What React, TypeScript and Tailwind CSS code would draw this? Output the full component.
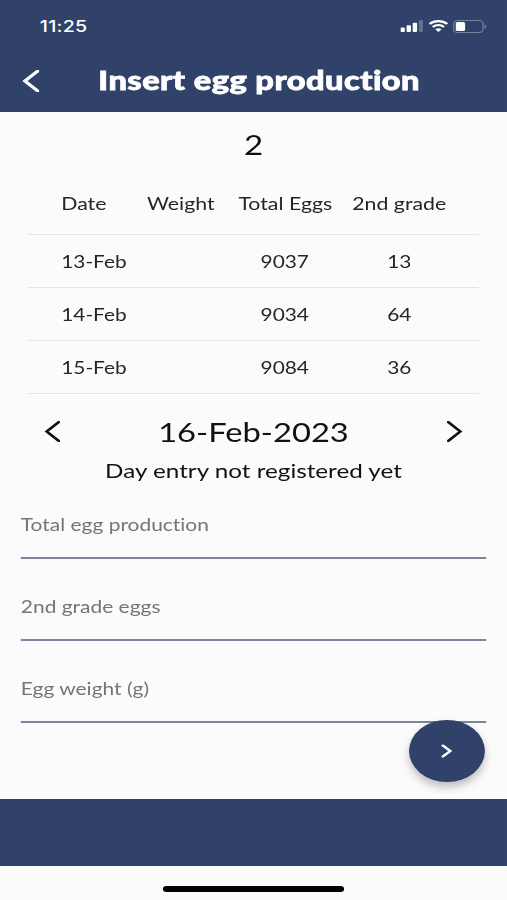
import React from "react";

const rows = [
  { date: "13-Feb", total: "9037", second: "13" },
  { date: "14-Feb", total: "9034", second: "64" },
  { date: "15-Feb", total: "9084", second: "36" },
];

const fields = ["Total egg production", "2nd grade eggs", "Egg weight (g)"];

const columns = "grid grid-cols-[70px_74px_78px_108px] items-center border-b-[1.5px] border-[#e4e4e5] pl-[27px]";

function Chevron({ left = false, className, weight = 2.3 }: { left?: boolean; className: string; weight?: number }) {
  return (
    <svg viewBox="0 0 12 20" preserveAspectRatio="none" fill="none" stroke="currentColor" className={className}>
      <path d={left ? "M11 1L2 10L11 19" : "M1 1L10 10L1 19"} strokeWidth={weight} strokeLinecap="round" />
    </svg>
  );
}

function StatusIcons() {
  return (
    <div className="flex items-center">
      <svg width="19" height="12" viewBox="0 0 19 12" fill="white">
        <rect x="0" y="7.5" width="3.6" height="4.5" rx="0.9" />
        <rect x="5" y="5.2" width="3.6" height="6.8" rx="0.9" />
        <rect x="10" y="2.7" width="3.6" height="9.3" rx="0.9" />
        <rect x="15" y="0" width="3.4" height="12" rx="0.9" opacity="0.25" />
      </svg>
      <svg width="16" height="12" viewBox="0 0 16 12" fill="none" stroke="white" className="ml-1">
        <path d="M0.8 4.1C4.8 0.1 11.2 0.1 15.2 4.1" strokeWidth="2.1" />
        <path d="M3.4 6.9C6 4.4 10 4.4 12.6 6.9" strokeWidth="2.1" />
        <path d="M5.4 9.2C6.9 7.9 9.1 7.9 10.6 9.2L8 11.9Z" fill="white" stroke="none" />
      </svg>
      <svg width="28" height="13" viewBox="0 0 28 13" fill="none" className="ml-[4px]">
        <rect x="0.5" y="0.5" width="24" height="12" rx="3.2" stroke="white" strokeOpacity="0.35" />
        <rect x="2.2" y="2" width="7.6" height="9" rx="1.5" fill="white" />
        <path d="M25.8 4.5C27.4 5.2 27.4 7.8 25.8 8.5Z" fill="white" fillOpacity="0.4" />
      </svg>
    </div>
  );
}

export default function App() {
  return (
    <div className="h-[900px] w-[507px] overflow-hidden bg-[#fbfbfb]">
      <div className="flex h-[900px] w-[414px] origin-top-left scale-x-[1.2246] flex-col font-['Lato',sans-serif] text-[#252525] [font-variant-ligatures:none]">
        <header className="h-[111.5px] shrink-0 bg-[#304269] text-white">
          <div className="flex h-[52px] items-center justify-between pr-[16.5px] pl-[32.5px]">
            <span className="font-['Inter',sans-serif] text-[16px] font-medium tracking-[0.2px]">11:25</span>
            <StatusIcons />
          </div>
          <div className="flex h-[59px] items-center pb-[2px] pl-[18px]">
            <Chevron left weight={2.6} className="h-[22px] w-[14px]" />
            <h1 className="ml-[48.3px] pt-[1px] text-[26.6px] font-black tracking-[0.37px] whitespace-nowrap [-webkit-text-stroke:0.8px_white]">Insert egg production</h1>
          </div>
        </header>

        <main className="flex h-[687.5px] shrink-0 flex-col">
          <div className="flex h-[62px] items-center justify-center pt-[5px] text-[27px] text-[#111]">2</div>
          <section className="mx-[23px] text-[17px] whitespace-nowrap">
            <div className={columns + " h-[61.5px] pt-px text-[17.4px]"}>
              <span>Date</span>
              <span>Weight</span>
              <span className="text-center">Total Eggs</span>
              <span className="text-center">2nd grade</span>
            </div>
            {rows.map((row) => (
              <div key={row.date} className={columns + " h-[53.1px] pt-[1.5px]"}>
                <span>{row.date}</span>
                <span />
                <span className="pr-px text-center">{row.total}</span>
                <span className="text-center">{row.second}</span>
              </div>
            ))}
          </section>

          <section className="flex h-[83px] flex-col text-[#111]">
            <div className="flex h-[75px] shrink-0 items-center justify-between pr-[36px] pl-[36px]">
              <Chevron left className="h-[21px] w-[13px]" />
              <span className="text-[26.7px]">16-Feb-2023</span>
              <Chevron className="h-[21px] w-[13px]" />
            </div>
            <p className="-mt-[11px] text-center text-[19.8px] leading-[24px]">Day entry not registered yet</p>
          </section>

          <form className="mx-[17px] flex flex-col text-[17.1px] text-[#757575]">
            {fields.map((field) => (
              <label key={field} className="flex h-[82px] items-end border-b-2 border-[#7c859d] pb-[20px] leading-[24px]">
                {field}
              </label>
            ))}
          </form>
          <button className="z-10 -mt-[3.5px] mr-[18px] flex size-[62px] shrink-0 items-center justify-center self-end rounded-full bg-[#304269] text-white shadow-[0_5px_8px_rgba(0,0,0,0.25)]">
            <Chevron weight={3.6} className="h-[12px] w-[8px] overflow-visible" />
          </button>
        </main>

        <div className="h-[66.5px] shrink-0 bg-[#304269]" />
        <footer className="flex flex-1 justify-center pt-[20px]">
          <div className="h-[6px] w-[148px] rounded-full bg-black" />
        </footer>
      </div>
    </div>
  );
}
